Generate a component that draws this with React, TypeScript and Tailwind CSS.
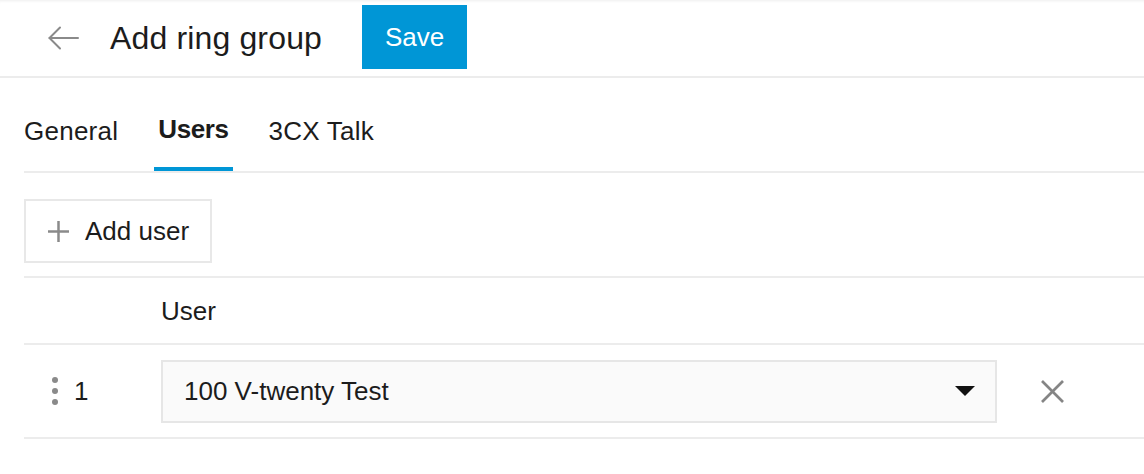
import { useState } from "react";

const tabs = ["General", "Users", "3CX Talk"];

export default function App() {
  const [active, setActive] = useState("Users");

  return (
    <div className="min-h-screen bg-white text-[#1c1c1c] font-['Liberation_Sans',Arial,sans-serif]">
      {/* header */}
      <header className="h-[78px] flex items-center border-b-2 border-[#ececec] shadow-[inset_0_3px_3px_-2px_rgba(0,0,0,0.07)]">
        <button className="ml-[48px] w-[31px] h-[24px] flex items-center text-[#8a8a8a]">
          <svg width="31" height="24" viewBox="0 0 31 24" fill="none" stroke="currentColor" strokeWidth="2" strokeLinecap="round" strokeLinejoin="round">
            <line x1="1.5" y1="12" x2="30" y2="12" />
            <polyline points="12,1.5 1.5,12 12,22.5" />
          </svg>
        </button>
        <h1 className="ml-[31px] text-[32px] leading-[38px] tracking-[0.15px] -mt-[1px]">Add ring group</h1>
        <button className="ml-[40px] -mt-[3px] h-[64px] px-[23px] bg-[#0096d6] text-white text-[26px] leading-[30px]">
          Save
        </button>
      </header>

      {/* tabs */}
      <div className="ml-6 h-[95px] flex items-end border-b-2 border-[#ececec]">
        <div className="flex items-end gap-[32px] -ml-1">
          {tabs.map((t) => {
            const on = t === active;
            return (
              <button
                key={t}
                onClick={() => setActive(t)}
                className={
                  on
                    ? "px-1 pb-[23px] border-b-4 border-[#0096d6] text-[26px] leading-[30px] font-bold tracking-[-0.4px]"
                    : "px-1 pb-[21px] border-b-4 border-transparent text-[26px] leading-[30px] tracking-[0.25px]"
                }
              >
                {t}
              </button>
            );
          })}
        </div>
      </div>

      <div className="ml-6">
        {/* add user */}
        <div className="pt-[26px] pb-[13px] border-b-2 border-[#ececec]">
          <button className="h-[64px] w-[188px] pl-[22px] flex items-center gap-[16px] border-2 border-[#e8e8e8] text-[26px] leading-[30px]">
            <svg width="21" height="21" viewBox="0 0 21 21" stroke="#8a8a8a" strokeWidth="2.5">
              <line x1="10.5" y1="0" x2="10.5" y2="21" />
              <line x1="0" y1="10.5" x2="21" y2="10.5" />
            </svg>
            Add user
          </button>
        </div>

        {/* table head */}
        <div className="h-[67px] grid grid-cols-[137px_836px_1fr] items-center border-b-2 border-[#ececec]">
          <div />
          <div className="text-[26px] leading-[30px]">User</div>
          <div />
        </div>

        {/* row */}
        <div className="h-[94px] grid grid-cols-[137px_836px_1fr] items-center border-b-2 border-[#ececec]">
          <div className="flex items-center pl-[28px] gap-[16px]">
            <div className="flex flex-col gap-[5px]">
              <span className="w-[6px] h-[6px] rounded-full bg-[#8a8a8a]" />
              <span className="w-[6px] h-[6px] rounded-full bg-[#8a8a8a]" />
              <span className="w-[6px] h-[6px] rounded-full bg-[#8a8a8a]" />
            </div>
            <span className="text-[26px] leading-[30px]">1</span>
          </div>
          <div className="h-[63px] flex items-center justify-between pl-[21px] pr-[20px] bg-[#fafafa] border-2 border-[#e6e6e6]">
            <span className="text-[26px] leading-[30px]">100 V-twenty Test</span>
            <svg width="20" height="10" viewBox="0 0 20 10">
              <polygon points="0,0 20,0 10,10" fill="#111" />
            </svg>
          </div>
          <div className="pl-[44px] flex items-center">
            <svg width="23" height="23" viewBox="0 0 23 23" stroke="#858585" strokeWidth="2.6">
              <line x1="1" y1="1" x2="22" y2="22" />
              <line x1="22" y1="1" x2="1" y2="22" />
            </svg>
          </div>
        </div>
      </div>
    </div>
  );
}
